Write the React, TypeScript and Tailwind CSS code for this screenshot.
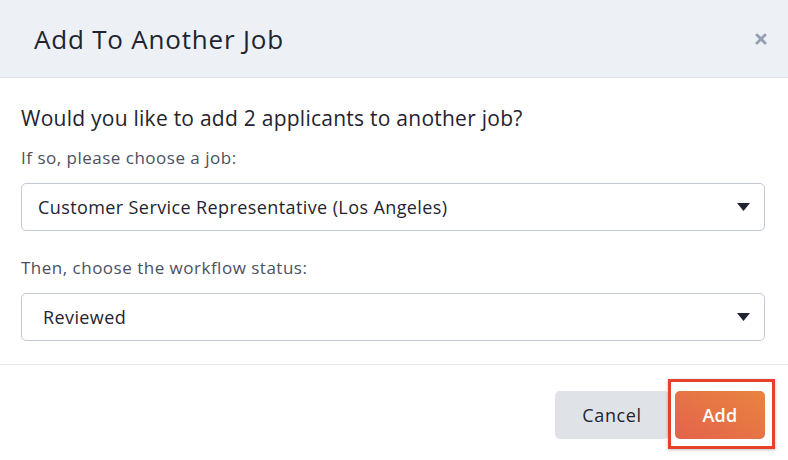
import { X } from 'lucide-react';

function Caret() {
  return (
    <svg width="13" height="8" viewBox="0 0 13 8" className="shrink-0">
      <path d="M0 0 L13 0 L6.5 8 Z" fill="#1f2430" />
    </svg>
  );
}

function SelectBox({ value, indent }: { value: string; indent: string }) {
  return (
    <div className="flex h-[48px] items-center justify-between rounded-[5px] border border-[#c3cad3] bg-white pr-[14px]">
      <span className={`${indent} text-[18px] leading-[24px] tracking-[0.4px] text-[#1f2430]`}>{value}</span>
      <Caret />
    </div>
  );
}

export default function App() {
  return (
    <div
      className="h-[460px] w-[788px] overflow-hidden bg-white"
      style={{ fontFamily: '"Open Sans", "Noto Sans", sans-serif' }}
    >
      <div className="flex h-[78px] items-center justify-between border-b border-[#dde1e6] bg-[#edf1f5] pl-[34px] pr-[19px]">
        <h2 className="text-[26px] leading-[32px] tracking-[0.8px] text-[#1f2430]">Add To Another Job</h2>
        <X size={16} strokeWidth={4.5} className="text-[#95a0b3]" />
      </div>

      <div className="border-b border-[#e3e6ea] pb-[23px] pl-[21px] pr-[23px] pt-[26px]">
        <p className="text-[21px] leading-[28px] tracking-[0.25px] text-[#1f2430]">
          Would you like to add 2 applicants to another job?
        </p>
        <p className="mt-[16px] text-[17px] leading-[20px] tracking-[0.5px] text-[#4b5160]">
          If so, please choose a job:
        </p>
        <div className="mt-[15px]">
          <SelectBox value="Customer Service Representative (Los Angeles)" indent="pl-[16px]" />
        </div>
        <p className="mt-[27px] text-[17px] leading-[20px] tracking-[0.5px] text-[#4b5160]">
          Then, choose the workflow status:
        </p>
        <div className="mt-[15px]">
          <SelectBox value="Reviewed" indent="pl-[21px]" />
        </div>
      </div>

      <div className="flex justify-end gap-[6px] pr-[23px] pt-[26px]">
        <button className="h-[48px] w-[114px] rounded-[5px] bg-[#dfe2e7] text-[18px] tracking-[0.6px] text-[#1f2430]">
          Cancel
        </button>
        <div className="relative">
          <button className="h-[48px] w-[90px] rounded-[5px] bg-gradient-to-tr from-[#e3624b] to-[#e8843e] text-[18px] font-semibold tracking-[0.3px] text-white">
            Add
          </button>
          <div className="pointer-events-none absolute -bottom-[10px] -left-[7px] -right-[10px] -top-[12px] border-[3px] border-[#e8412b] shadow-[0_1px_3px_rgba(0,0,0,0.25)]" />
        </div>
      </div>
    </div>
  );
}
